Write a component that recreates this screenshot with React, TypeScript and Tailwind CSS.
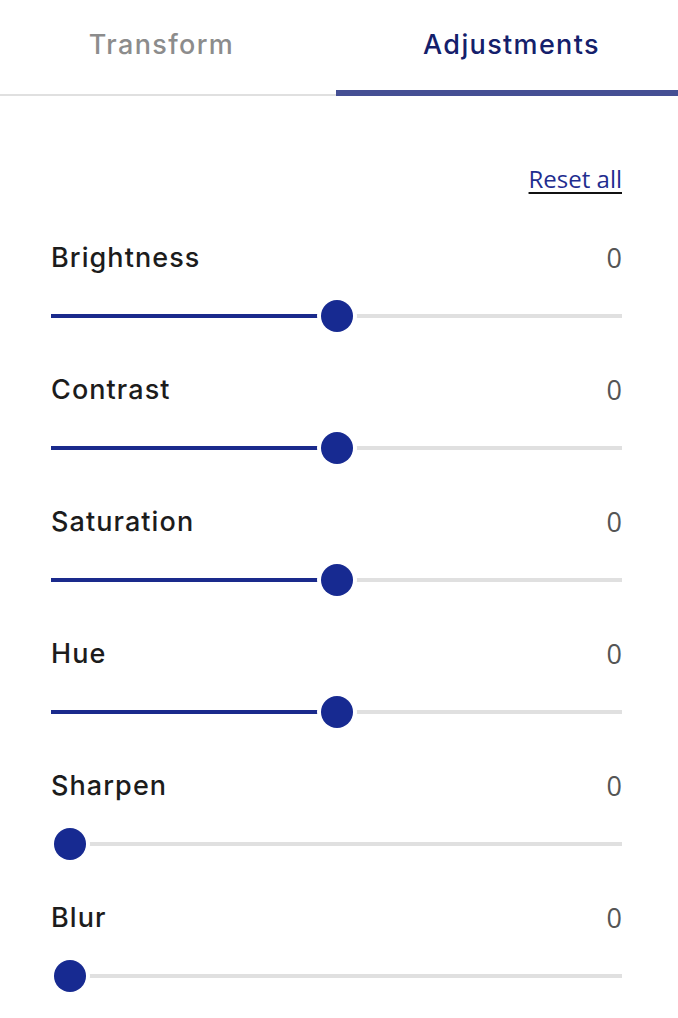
import { useState } from "react";

const rows = [
  { key: "brightness", label: "Brightness", value: 0, min: -100, max: 100 },
  { key: "contrast", label: "Contrast", value: 0, min: -100, max: 100 },
  { key: "saturation", label: "Saturation", value: 0, min: -100, max: 100 },
  { key: "hue", label: "Hue", value: 0, min: -100, max: 100 },
  { key: "sharpen", label: "Sharpen", value: 0, min: 0, max: 100 },
  { key: "blur", label: "Blur", value: 0, min: 0, max: 100 },
];

const tabs = [
  { id: "transform", label: "Transform", box: "w-[336px] pr-[13px]" },
  { id: "adjustments", label: "Adjustments", box: "flex-1 pl-[9px]" },
];

function Slider({ value, min, max }: { value: number; min: number; max: number }) {
  const pct = (value - min) / (max - min);
  // thumb center travels from 19px to (width - 19px)
  const center = `calc(19px + ${pct} * (100% - 38px))`;
  return (
    <div className="relative h-[40px] w-full">
      <div className="absolute left-0 right-0 top-[18px] h-[4px] bg-[#e0e0e0]" />
      <div className="absolute left-0 top-[18px] h-[4px] bg-[#1a2a8c]" style={{ width: center }} />
      <div
        className="absolute top-[4px] h-[32px] w-[32px] -translate-x-1/2 rounded-full bg-[#172a91] ring-4 ring-white"
        style={{ left: center }}
      />
    </div>
  );
}

export default function App() {
  const [tab, setTab] = useState("adjustments");

  return (
    <div className="min-h-screen w-full bg-white">
      <div className="flex">
        {tabs.map((t) => (
          <button key={t.id} onClick={() => setTab(t.id)} className={`flex flex-col ${t.box.split(" ")[0]}`}>
            <span
              className={`flex h-[90px] w-full items-center justify-center text-[27px] font-medium tracking-[0.05em] font-['Inter',sans-serif] ${
                t.id === "transform" ? "pr-[13px]" : "pl-[9px]"
              } ${tab === t.id ? "text-[#14206b]" : "text-[#8c8c8c]"}`}
            >
              {t.label}
            </span>
            {tab === t.id ? (
              <span className="h-[6px] w-full bg-[#454f94]" />
            ) : (
              <span className="flex h-[6px] w-full flex-col justify-end">
                <span className="h-[2px] w-full bg-[#e0e0e0]" />
              </span>
            )}
          </button>
        ))}
      </div>

      <div className="pl-[51px] pr-[56px] pt-[66px]">
        <div className="flex justify-end">
          <a
            href="#"
            className="text-[24px] leading-[34px] text-[#1f2d8f] underline underline-offset-[4px] decoration-[#111] font-['Open_Sans',sans-serif]"
          >
            Reset all
          </a>
        </div>

        <div className="mt-[36px] flex flex-col">
          {rows.map((r) => (
            <div key={r.key} className="flex h-[132px] flex-col">
              <div className="flex h-[52px] items-center justify-between">
                <span className="text-[27px] font-medium tracking-[0.04em] text-[#1c1c1c] font-['Inter',sans-serif]">
                  {r.label}
                </span>
                <span className="text-[27px] text-[#555] font-['Open_Sans',sans-serif]">{r.value}</span>
              </div>
              <div className="mt-[12px]">
                <Slider value={r.value} min={r.min} max={r.max} />
              </div>
            </div>
          ))}
        </div>
      </div>
    </div>
  );
}
